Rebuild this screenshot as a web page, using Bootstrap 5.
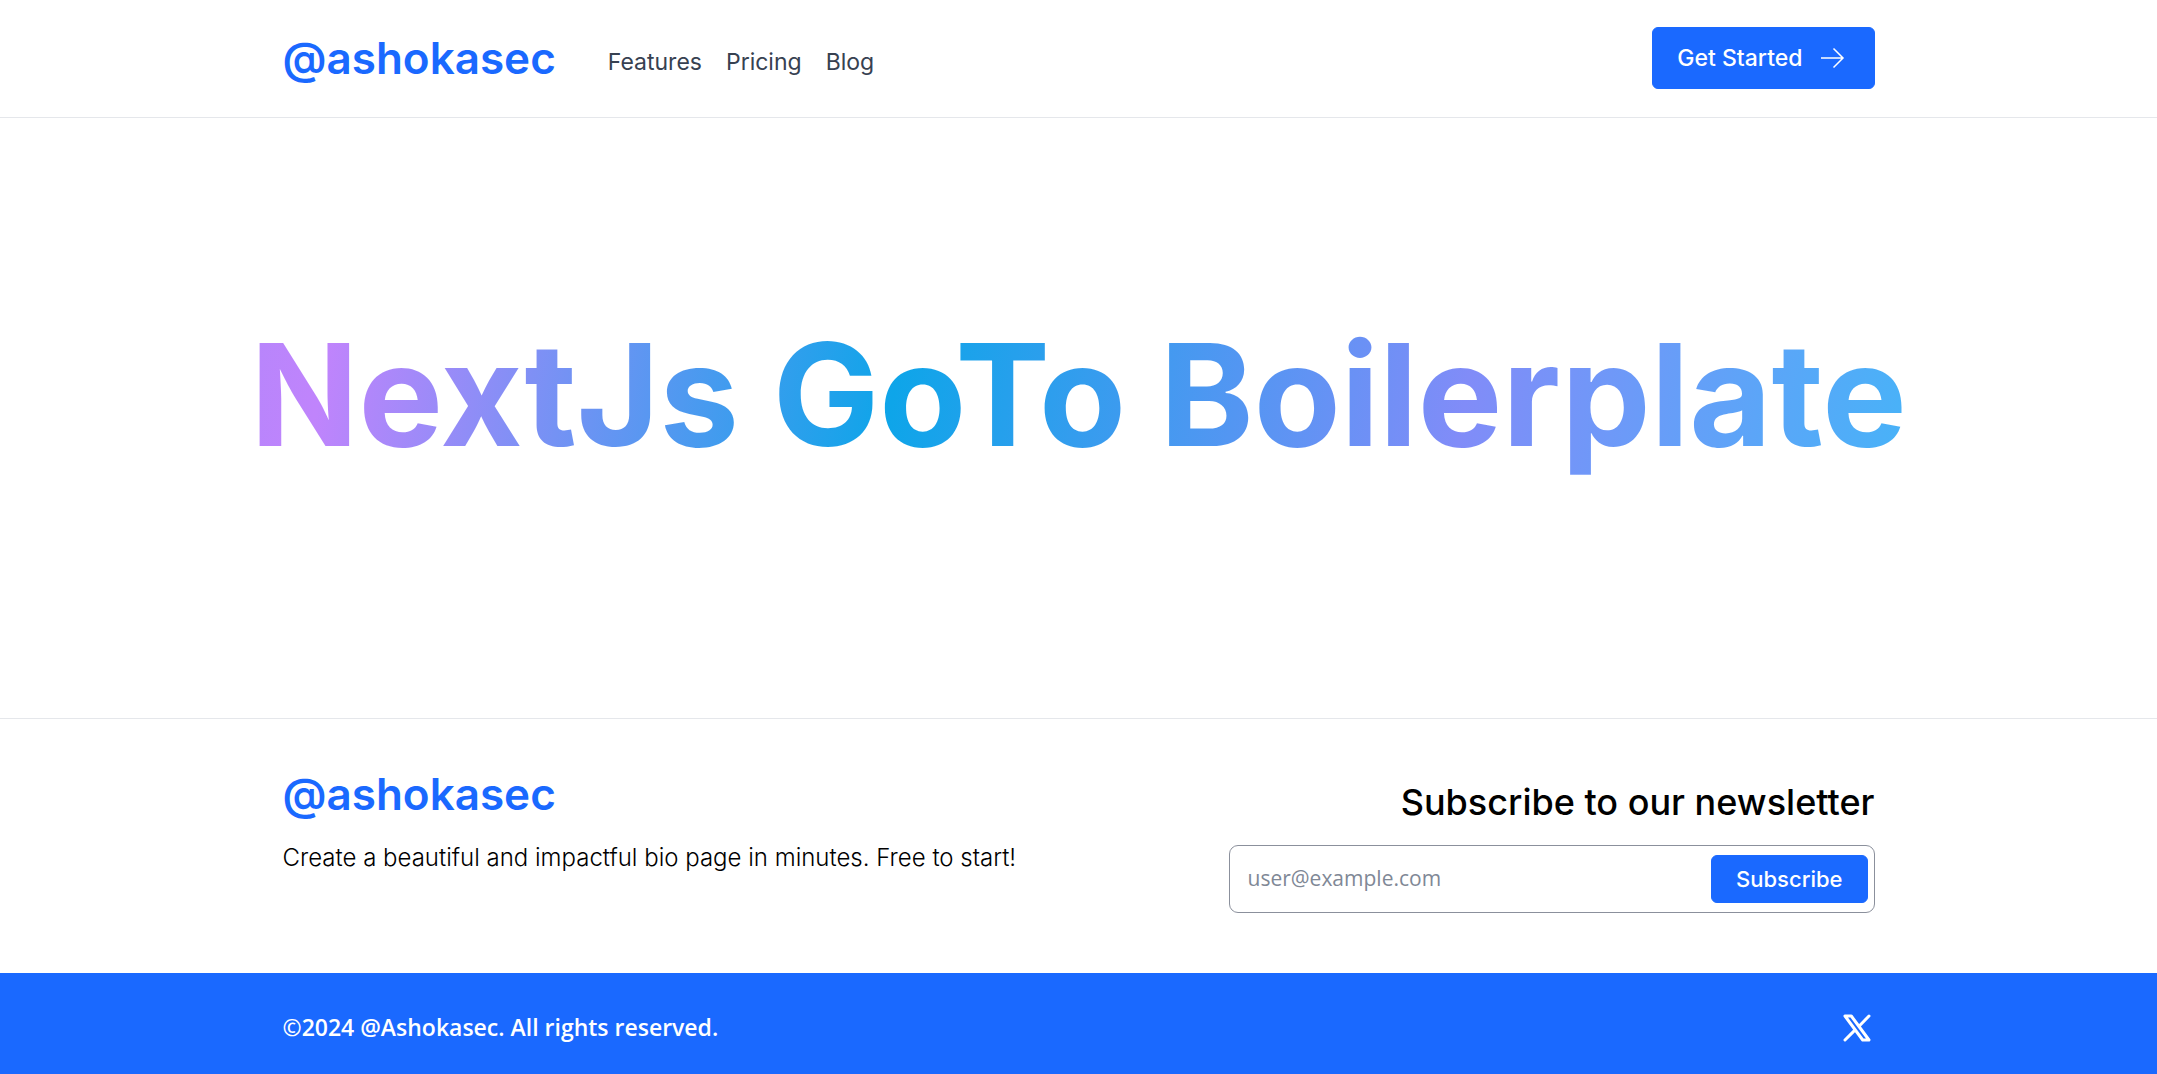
<!DOCTYPE html>
<html lang="en">
<head>
<meta charset="utf-8">
<meta name="viewport" content="width=device-width, initial-scale=1">
<title>@ashokasec</title>
<link rel="stylesheet" href="https://cdn.jsdelivr.net/npm/bootstrap@5.3.0/dist/css/bootstrap.min.css">
<style>
  :root { --brand: #1a69ff; --line: #e5e7eb; }
  body { font-family: Inter, "Liberation Sans", sans-serif; font-size: 24px; color: #000; background: #fff; }
  .page-width { width: 100%; max-width: 1592px; margin-inline: auto; }
  .site-header { border-bottom: 1px solid var(--line); padding-top: 27px; padding-bottom: 28px; }
  .brand-row { gap: 52px; }
  .wordmark { font-size: 44px; line-height: 60px; font-weight: 600; color: var(--brand); text-decoration: none; }
  .site-links .nav-link { color: #374151; padding: 0; font-size: 23px; line-height: 32px; }
  .btn-brand { --bs-btn-color: #fff; --bs-btn-bg: var(--brand); --bs-btn-border-color: var(--brand);
    --bs-btn-hover-color: #fff; --bs-btn-hover-bg: #0f58e0; --bs-btn-hover-border-color: #0f58e0;
    --bs-btn-font-size: 23px; --bs-btn-font-weight: 500; --bs-btn-border-radius: 6px; --bs-btn-padding-x: 24px; }
  .btn-start { height: 62px; }
  .hero { height: 600px; padding-bottom: 48px; }
  .hero-title { font-size: 142px; line-height: 180px; font-weight: 700; white-space: nowrap; color: transparent;
    background-image: linear-gradient(100deg, #818cf8 -28%, #c084fc 5%, #0ea5e9 39%, #818cf8 73%, #38bdf8 107%);
    -webkit-background-clip: text; background-clip: text; }
  .site-footer { border-top: 1px solid var(--line); }
  .footer-main { padding-top: 45px; padding-bottom: 60px; }
  .tagline { font-weight: 300; line-height: 36px; margin-top: 16px; }
  .news-title { font-size: 36px; line-height: 44px; font-weight: 500; margin-top: 16px; margin-bottom: 21px; }
  .news-form { width: 646px; max-width: 100%; }
  .news-box { height: 68px; border: 1px solid #8b909c; border-radius: 9px; padding: 0 6px 0 18px; }
  .news-box .form-control { font-family: "Open Sans", "Noto Sans", sans-serif; font-size: 21px; }
  .news-box .form-control::placeholder { color: #808896; }
  .btn-subscribe { --bs-btn-font-size: 22px; height: 48px; padding-block: 0; }
  .copy-bar { background: var(--brand); color: #fff; min-height: 101px; padding-top: 8px; }
  .copyright { font-family: "Open Sans", "Noto Sans", sans-serif; font-size: 23px; font-weight: 600; }
</style>
<script src="https://cdn.jsdelivr.net/npm/bootstrap@5.3.0/dist/js/bootstrap.bundle.min.js"></script>
</head>
<body class="overflow-x-hidden">
<header class="site-header">
  <div class="page-width d-flex align-items-center justify-content-between">
    <div class="brand-row d-flex align-items-center">
      <a class="wordmark" href="#">@ashokasec</a>
      <nav class="nav site-links gap-4 pt-2" aria-label="Main">
        <a class="nav-link" href="#features">Features</a>
        <a class="nav-link" href="#pricing">Pricing</a>
        <a class="nav-link" href="#blog">Blog</a>
      </nav>
    </div>
    <button type="button" class="btn btn-brand btn-start d-flex align-items-center gap-3">
      Get Started
      <svg width="31" height="24" viewBox="0 0 31 24" fill="none" stroke="currentColor" stroke-width="1.5" aria-hidden="true"><path d="M2 12H24.500M14.500 2.500 24 12 14.500 21.500"/></svg>
    </button>
  </div>
</header>
<main class="hero d-flex align-items-center justify-content-center">
  <h1 class="hero-title mb-0">NextJs GoTo Boilerplate</h1>
</main>
<footer class="site-footer">
  <div class="page-width footer-main d-flex justify-content-between">
    <div>
      <a class="wordmark d-block" href="#">@ashokasec</a>
      <p class="tagline mb-0">Create a beautiful and impactful bio page in minutes. Free to start!</p>
    </div>
    <form class="news-form" onsubmit="return false">
      <label for="email" class="news-title d-block text-end">Subscribe to our newsletter</label>
      <div class="news-box d-flex align-items-center">
        <input id="email" type="email" class="form-control border-0 shadow-none bg-transparent p-0" placeholder="user@example.com">
        <button type="submit" class="btn btn-brand btn-subscribe">Subscribe</button>
      </div>
    </form>
  </div>
  <div class="copy-bar d-flex align-items-center">
    <div class="page-width d-flex align-items-center justify-content-between">
      <span class="copyright">©2024 @Ashokasec. All rights reserved.</span>
      <a href="#x" class="text-white d-flex" aria-label="X"><svg width="36" height="36" viewBox="0 0 24 24" fill="none" stroke="currentColor" stroke-width="2" stroke-linejoin="round" stroke-linecap="round" aria-hidden="true"><path d="M4 4H8.200L20 20H15.800ZM20 4 13.500 10.700M10.600 13.400 4 20"/></svg></a>
    </div>
  </div>
</footer>
</body>
</html>
